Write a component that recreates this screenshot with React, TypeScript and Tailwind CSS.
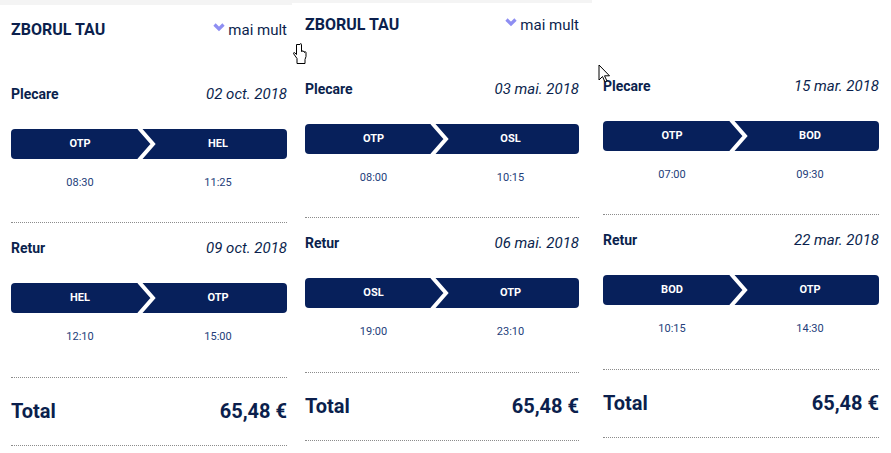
const font = { fontFamily: 'Roboto, "Noto Sans", sans-serif' };

type Leg = { label: string; date: string; from: string; to: string; dep: string; arr: string };

type Flight = {
  band: string;
  headMt: string;
  showHeader: boolean;
  wrap: string;
  legs: Leg[];
};

const flights: Flight[] = [
  {
    band: 'h-[5px]',
    headMt: 'mt-[15px]',
    showHeader: true,
    wrap: 'w-[292px] pl-[11px] pr-[5px]',
    legs: [
      { label: 'Plecare', date: '02 oct. 2018', from: 'OTP', to: 'HEL', dep: '08:30', arr: '11:25' },
      { label: 'Retur', date: '09 oct. 2018', from: 'HEL', to: 'OTP', dep: '12:10', arr: '15:00' },
    ],
  },
  {
    band: 'h-[3px]',
    headMt: 'mt-[12px]',
    showHeader: true,
    wrap: 'w-[300px] pl-[13px] pr-[13px]',
    legs: [
      { label: 'Plecare', date: '03 mai. 2018', from: 'OTP', to: 'OSL', dep: '08:00', arr: '10:15' },
      { label: 'Retur', date: '06 mai. 2018', from: 'OSL', to: 'OTP', dep: '19:00', arr: '23:10' },
    ],
  },
  {
    band: 'h-0',
    headMt: 'mt-[12px]',
    showHeader: false,
    wrap: 'w-[299px] pl-[11px] pr-[12px]',
    legs: [
      { label: 'Plecare', date: '15 mar. 2018', from: 'OTP', to: 'BOD', dep: '07:00', arr: '09:30' },
      { label: 'Retur', date: '22 mar. 2018', from: 'BOD', to: 'OTP', dep: '10:15', arr: '14:30' },
    ],
  },
];

function ChevronDown() {
  return (
    <svg width="12" height="9" viewBox="0 0 12 9" className="mr-[3px] -mt-[6px]">
      <polyline points="1.5,1.5 6,6 10.5,1.5" fill="none" stroke="#8e8ef2" strokeWidth="3.2" />
    </svg>
  );
}

function Dotted() {
  return <div className="border-t border-dotted border-[#8c8c8c]" />;
}

function LegBlock({ leg, gap }: { leg: Leg; gap: string }) {
  return (
    <div>
      <div className="flex h-[20px] items-center justify-between">
        <span className="text-[14px] font-bold text-[#0b1f4d]">{leg.label}</span>
        <span className="text-[15px] italic text-[#0b1f4d]">{leg.date}</span>
      </div>
      <div className="relative mt-[25px] flex h-[30px] rounded-[4px] bg-[#07205b] text-[11px] font-bold text-white">
        <div className="flex flex-1 items-center justify-center">{leg.from}</div>
        <div className="flex flex-1 items-center justify-center">{leg.to}</div>
        <svg
          width="24"
          height="30"
          viewBox="0 0 24 30"
          className="absolute left-1/2 top-0 -translate-x-[13px]"
        >
          <polyline points="3,-1 17,15 3,31" fill="none" stroke="white" strokeWidth="4" />
        </svg>
      </div>
      <div className="mt-[16px] flex h-[16px] text-[11px] text-[#24407a]">
        <div className="flex flex-1 items-center justify-center">{leg.dep}</div>
        <div className="flex flex-1 items-center justify-center">{leg.arr}</div>
      </div>
      <div className={gap}>
        <Dotted />
      </div>
    </div>
  );
}

function Panel({ f }: { f: Flight }) {
  return (
    <div className="shrink-0">
      <div className={`${f.band} bg-[#f4f4f4]`} />
      <div className={f.wrap}>
        <div className={`${f.headMt} flex h-[20px] items-center justify-between ${f.showHeader ? '' : 'invisible'}`}>
          <span className="text-[16px] font-bold text-[#0b1f4d]">ZBORUL TAU</span>
          <span className="flex items-center text-[15px] text-[#0b1f4d]">
            <ChevronDown />
            mai mult
          </span>
        </div>
        <div className="mt-[44px]">
          <LegBlock leg={f.legs[0]} gap="mt-[31px]" />
          <div className="mt-[15px]">
            <LegBlock leg={f.legs[1]} gap="mt-[32px]" />
          </div>
        </div>
        <div className="mt-[19px] flex h-[28px] items-center justify-between text-[20px] font-bold text-[#0b1f4d]">
          <span>Total</span>
          <span>65,48 €</span>
        </div>
        <div className="mt-[20px]">
          <Dotted />
        </div>
      </div>
    </div>
  );
}

function HandCursor() {
  return (
    <svg width="14" height="22" viewBox="0 0 14 22" className="absolute left-[293px] top-[43px]">
      <path
        d="M3.5 1.5 v10 l-1.5 -1.5 c-1 -1 -2 0 -1.2 1 l3.2 4.5 v5 h8 v-4 l1 -3 v-4 c0 -1 -1.5 -1 -1.5 0 v-0.5 c0 -1 -1.5 -1 -1.5 0 v-0.5 c0 -1 -1.5 -1 -1.5 0 v-7 c0 -1.2 -1.5 -1.2 -1.5 0 z"
        fill="white"
        stroke="black"
        strokeWidth="1"
      />
    </svg>
  );
}

function ArrowCursor() {
  return (
    <svg width="12" height="19" viewBox="0 0 12 19" className="absolute left-[598px] top-[64px]">
      <path d="M1 1 v15 l3.5 -3.5 l2.5 5.5 l2 -1 l-2.5 -5.2 h5 z" fill="white" stroke="black" strokeWidth="1" />
    </svg>
  );
}

export default function App() {
  return (
    <div className="relative flex h-[453px] w-[891px] overflow-hidden bg-white" style={font}>
      {flights.map((f, i) => (
        <Panel key={i} f={f} />
      ))}
      <HandCursor />
      <ArrowCursor />
    </div>
  );
}
